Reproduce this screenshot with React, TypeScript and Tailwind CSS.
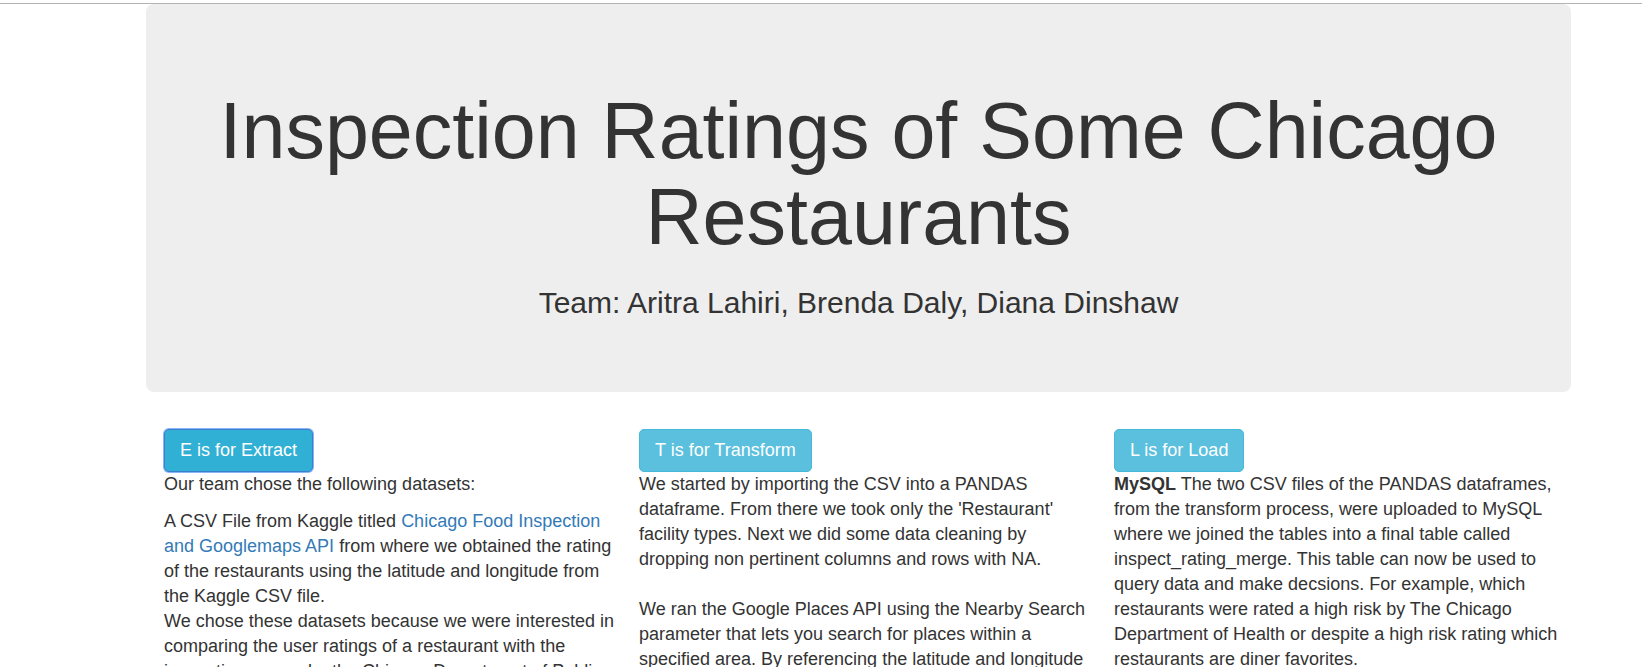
const buttonBase =
  "h-[43px] rounded-[5px] border px-[15px] text-[18px] leading-[25px] text-white";

export default function App() {
  return (
    <div className="mt-[3px] border-t border-[#b3b3b3] bg-white font-['Liberation_Sans',Arial,sans-serif] text-[#333333]">
      <div className="pl-[146px] pr-[71px]">
        <header className="rounded-lg bg-[#eeeeee] px-[60px] pt-[84px] pb-[73px] text-center">
          <h1 className="text-[79px] leading-[86px]">
            Inspection Ratings of Some Chicago Restaurants
          </h1>
          <h2 className="mt-[26px] text-[30px] leading-[33px]">
            Team: Aritra Lahiri, Brenda Daly, Diana Dinshaw
          </h2>
        </header>
        <main className="mt-[37px] grid grid-cols-3 text-[18px] leading-[25px]">
          <section className="pl-[18px] pr-1">
            <button
              type="button"
              className={`${buttonBase} border-[#3b7fd0] bg-[#31b0d5] ring-1 ring-[#8ab4f8]`}
            >
              E is for Extract
            </button>
            <p>Our team chose the following datasets:</p>
            <p className="mt-3">
              A CSV File from Kaggle titled{" "}
              <a href="#datasets" className="text-[#337ab7]">
                Chicago Food Inspection and Googlemaps API
              </a>{" "}
              from where we obtained the rating of the restaurants using the
              latitude and longitude from the Kaggle CSV file.
            </p>
            <p>
              We chose these datasets because we were interested in comparing
              the user ratings of a restaurant with the inspection scores by the
              Chicago Department of Public
            </p>
          </section>
          <section className="pl-[18px] pr-1">
            <button
              type="button"
              className={`${buttonBase} border-[#46b8da] bg-[#5bc0de]`}
            >
              T is for Transform
            </button>
            <p>
              We started by importing the CSV into a PANDAS dataframe. From
              there we took only the 'Restaurant' facility types. Next we did
              some data cleaning by dropping non pertinent columns and rows with
              NA.
            </p>
            <p className="mt-[25px]">
              We ran the Google Places API using the Nearby Search parameter
              that lets you search for places within a specified area. By
              referencing the latitude and longitude
            </p>
          </section>
          <section className="pl-[18px] pr-1">
            <button
              type="button"
              className={`${buttonBase} border-[#46b8da] bg-[#5bc0de]`}
            >
              L is for Load
            </button>
            <p>
              <b>MySQL</b> The two CSV files of the PANDAS dataframes, from the
              transform process, were uploaded to MySQL where we joined the
              tables into a final table called inspect_rating_merge. This table
              can now be used to query data and make decsions. For example,
              which restaurants were rated a high risk by The Chicago Department
              of Health or despite a high risk rating which restaurants are
              diner favorites.
            </p>
          </section>
        </main>
      </div>
    </div>
  );
}
